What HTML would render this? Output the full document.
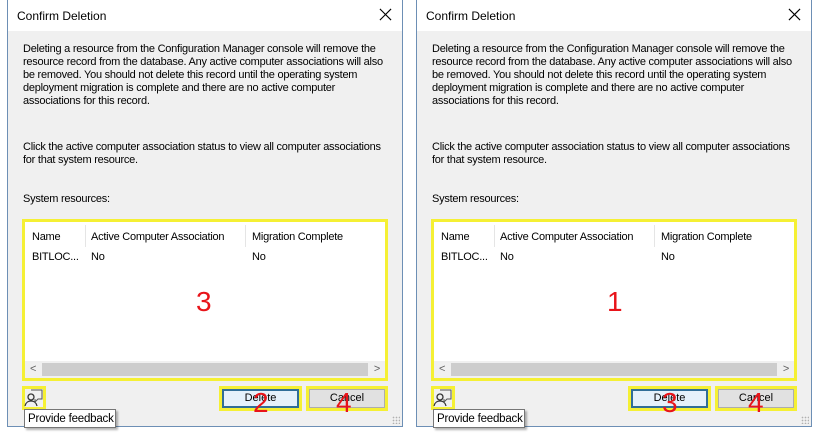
<!DOCTYPE html>
<html><head><style>
*{margin:0;padding:0;box-sizing:border-box}
body{width:818px;height:433px;background:#fff;position:relative;overflow:hidden;font-family:"Liberation Sans",sans-serif;font-size:11px;color:#000}
.dlg{position:absolute;top:0;width:396px;height:427px;border:1px solid #6d8fb5;border-top:none;background:#f0f0f0}
.title{position:absolute;left:0;top:0;right:0;height:31px;background:#fff;font-size:12px}
.title span{position:absolute;left:9px;top:9px}
.x{position:absolute;right:10px;top:8px;width:13px;height:13px}
.t{position:absolute;white-space:nowrap;line-height:13px;letter-spacing:-0.25px}
.list{position:absolute;left:14px;top:219px;width:366px;height:162px;border:3px solid #f5f034;background:#fff}
.sep{position:absolute;top:3px;width:1px;height:22px;background:#e5e5e5}
.sb{position:absolute;left:0;right:0;bottom:0;height:17px;background:#f0f0f0}
.sb .th{position:absolute;left:17px;right:17px;top:2px;bottom:2px;background:#cdcdcd}
.btn{position:absolute;top:386px;height:25px;border:3px solid #f5f034}
.btn div{position:absolute;inset:0;background:#e1e1e1;border:1px solid #adadad;text-align:center;line-height:17px}
.btn.def div{border:2px solid #2f6e99;background:#e5f1fb;line-height:15px}
.num{position:absolute;color:#e8141a;font-size:28px;line-height:28px}
.fb{position:absolute;left:14px;top:386px;width:24px;height:24px;border:3px solid #f5f034}
.tip{position:absolute;left:16px;top:409px;width:92px;height:19px;border:1px solid #767676;background:#fff;font-size:11.5px;padding:3px 3px;box-shadow:2px 2px 2px rgba(0,0,0,.3);white-space:nowrap;letter-spacing:-0.2px}
.grip{position:absolute;right:2px;bottom:2px;width:8px;height:8px;background:radial-gradient(#b0b0b0 35%,transparent 40%) 0 0/3px 3px}
</style></head><body>

<div class="dlg" style="left:7px">
 <div class="title"><span>Confirm Deletion</span><svg class="x" viewBox="0 0 14 14"><path d="M1 1L13 13M13 1L1 13" stroke="#000" stroke-width="1.2"/></svg></div>
 <div class="t" style="left:15px;top:43px">Deleting a resource from the Configuration Manager console will remove the<br>resource record from the database. Any active computer associations will also<br>be removed. You should not delete this record until the operating system<br>deployment migration is complete and there are no active computer<br>associations for this record.</div>
 <div class="t" style="left:15px;top:141px">Click the active computer association status to view all computer associations<br>for that system resource.</div>
 <div class="t" style="left:15px;top:193px">System resources:</div>
 <div class="list">
  <div class="t" style="left:7px;top:9px">Name</div><div class="sep" style="left:60px"></div>
  <div class="t" style="left:66px;top:9px">Active Computer Association</div><div class="sep" style="left:220px"></div>
  <div class="t" style="left:227px;top:9px">Migration Complete</div>
  <div class="t" style="left:7px;top:29px">BITLOC...</div>
  <div class="t" style="left:66px;top:29px">No</div>
  <div class="t" style="left:227px;top:29px">No</div>
  <div class="sb"><div class="th"></div><span class="t" style="left:5px;top:2px;color:#606060">&lt;</span><span class="t" style="right:5px;top:2px;color:#606060">&gt;</span></div>
 </div>
 <div class="num" style="left:188px;top:288px">3</div>
 <div class="fb"><svg width="20" height="20" viewBox="0 0 20 20" style="position:absolute;left:-1px;top:-1px"><path d="M7 2h11v9h-4l-3 3v-3" fill="none" stroke="#555"/><circle cx="7" cy="9" r="3" fill="none" stroke="#333" stroke-width="1.3"/><path d="M1 18c1-4 3-5 6-5s5 1 6 5" fill="none" stroke="#333" stroke-width="1.3"/></svg></div>
 <div class="btn def" style="left:211px;width:83px"><div>Delete</div></div>
 <div class="btn" style="left:298px;width:82px"><div>Cancel</div></div>
 <div class="num" style="left:245px;top:389px">2</div>
 <div class="num" style="left:328px;top:389px">4</div>
 <div class="tip">Provide feedback</div>
 <div class="grip"></div>
</div>

<div class="dlg" style="left:416px">
 <div class="title"><span>Confirm Deletion</span><svg class="x" viewBox="0 0 14 14"><path d="M1 1L13 13M13 1L1 13" stroke="#000" stroke-width="1.2"/></svg></div>
 <div class="t" style="left:15px;top:43px">Deleting a resource from the Configuration Manager console will remove the<br>resource record from the database. Any active computer associations will also<br>be removed. You should not delete this record until the operating system<br>deployment migration is complete and there are no active computer<br>associations for this record.</div>
 <div class="t" style="left:15px;top:141px">Click the active computer association status to view all computer associations<br>for that system resource.</div>
 <div class="t" style="left:15px;top:193px">System resources:</div>
 <div class="list">
  <div class="t" style="left:7px;top:9px">Name</div><div class="sep" style="left:60px"></div>
  <div class="t" style="left:66px;top:9px">Active Computer Association</div><div class="sep" style="left:220px"></div>
  <div class="t" style="left:227px;top:9px">Migration Complete</div>
  <div class="t" style="left:7px;top:29px">BITLOC...</div>
  <div class="t" style="left:66px;top:29px">No</div>
  <div class="t" style="left:227px;top:29px">No</div>
  <div class="sb"><div class="th"></div><span class="t" style="left:5px;top:2px;color:#606060">&lt;</span><span class="t" style="right:5px;top:2px;color:#606060">&gt;</span></div>
 </div>
 <div class="num" style="left:190px;top:288px">1</div>
 <div class="fb"><svg width="20" height="20" viewBox="0 0 20 20" style="position:absolute;left:-1px;top:-1px"><path d="M7 2h11v9h-4l-3 3v-3" fill="none" stroke="#555"/><circle cx="7" cy="9" r="3" fill="none" stroke="#333" stroke-width="1.3"/><path d="M1 18c1-4 3-5 6-5s5 1 6 5" fill="none" stroke="#333" stroke-width="1.3"/></svg></div>
 <div class="btn def" style="left:211px;width:83px"><div>Delete</div></div>
 <div class="btn" style="left:298px;width:82px"><div>Cancel</div></div>
 <div class="num" style="left:245px;top:389px">3</div>
 <div class="num" style="left:331px;top:389px">4</div>
 <div class="tip">Provide feedback</div>
 <div class="grip"></div>
</div>
</body></html>
